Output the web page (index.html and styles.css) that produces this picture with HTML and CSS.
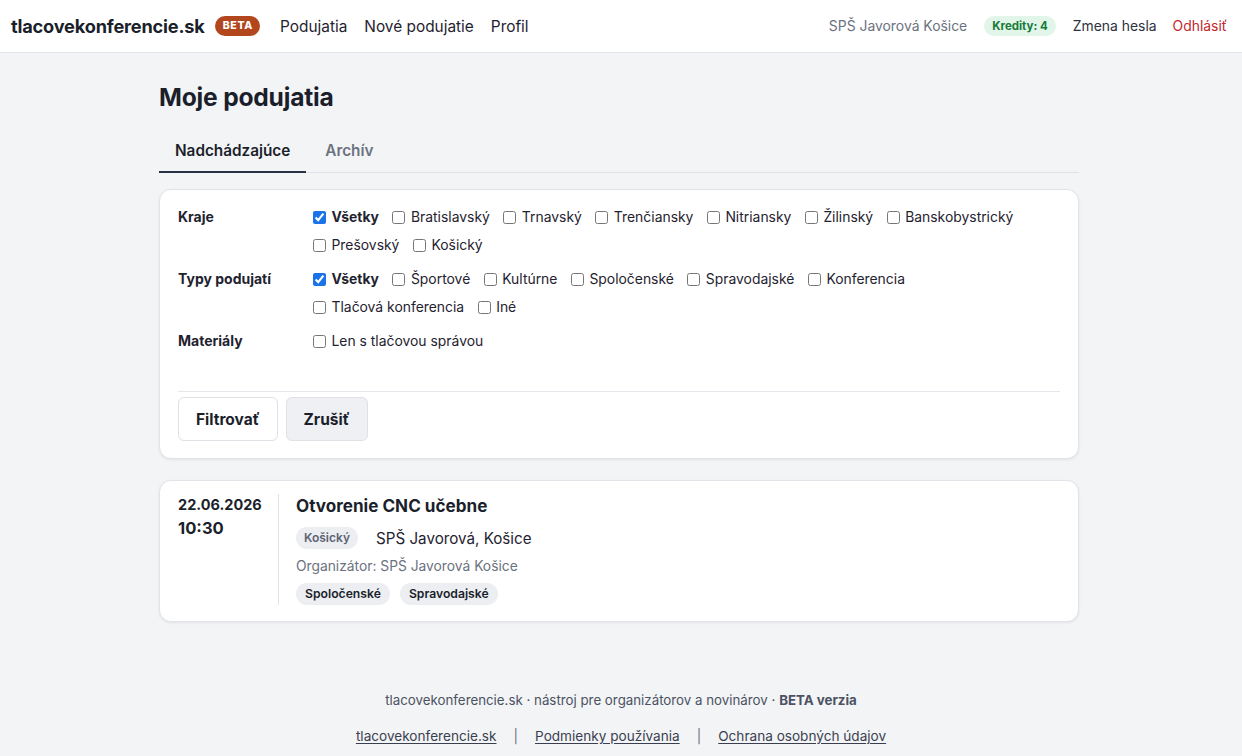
FILE: index.html
```html
<!DOCTYPE html>
<html lang="sk">
<head>
<meta charset="utf-8">
<title>Moje podujatia</title>
<link rel="stylesheet" href="styles.css">
</head>
<body>
<header class="topbar">
  <div class="left">
    <span class="brand">tlacovekonferencie.sk</span>
    <span class="beta">BETA</span>
    <nav class="mainnav">
      <a href="#">Podujatia</a>
      <a href="#">Nové podujatie</a>
      <a href="#">Profil</a>
    </nav>
  </div>
  <div class="right">
    <span class="org">SPŠ Javorová Košice</span>
    <span class="credits">Kredity: 4</span>
    <a href="#" class="plain">Zmena hesla</a>
    <a href="#" class="logout">Odhlásiť</a>
  </div>
</header>

<main class="container">
  <h1>Moje podujatia</h1>
  <div class="tabs">
    <a href="#" class="tab active">Nadchádzajúce</a>
    <a href="#" class="tab">Archív</a>
  </div>

  <form class="card filter">
    <div class="frow">
      <div class="flabel">Kraje</div>
      <div class="opts">
        <label class="opt strong"><input type="checkbox" checked>Všetky</label>
        <label class="opt"><input type="checkbox">Bratislavský</label>
        <label class="opt"><input type="checkbox">Trnavský</label>
        <label class="opt"><input type="checkbox">Trenčiansky</label>
        <label class="opt"><input type="checkbox">Nitriansky</label>
        <label class="opt"><input type="checkbox">Žilinský</label>
        <label class="opt"><input type="checkbox">Banskobystrický</label>
        <label class="opt"><input type="checkbox">Prešovský</label>
        <label class="opt"><input type="checkbox">Košický</label>
      </div>
    </div>
    <div class="frow">
      <div class="flabel">Typy podujatí</div>
      <div class="opts">
        <label class="opt strong"><input type="checkbox" checked>Všetky</label>
        <label class="opt"><input type="checkbox">Športové</label>
        <label class="opt"><input type="checkbox">Kultúrne</label>
        <label class="opt"><input type="checkbox">Spoločenské</label>
        <label class="opt"><input type="checkbox">Spravodajské</label>
        <label class="opt"><input type="checkbox">Konferencia</label>
        <label class="opt"><input type="checkbox">Tlačová konferencia</label>
        <label class="opt"><input type="checkbox">Iné</label>
      </div>
    </div>
    <div class="frow">
      <div class="flabel">Materiály</div>
      <div class="opts">
        <label class="opt"><input type="checkbox">Len s tlačovou správou</label>
      </div>
    </div>
    <div class="actions">
      <button type="button" class="btn">Filtrovať</button>
      <button type="button" class="btn grey">Zrušiť</button>
    </div>
  </form>

  <article class="card event">
    <div class="when">
      <div class="date">22.06.2026</div>
      <div class="time">10:30</div>
    </div>
    <div class="info">
      <h2>Otvorenie CNC učebne</h2>
      <div class="place"><span class="chip muted">Košický</span><span>SPŠ Javorová, Košice</span></div>
      <div class="organizer">Organizátor: SPŠ Javorová Košice</div>
      <div class="tags"><span class="chip">Spoločenské</span><span class="chip">Spravodajské</span></div>
    </div>
  </article>
</main>

<footer class="footer">
  <p class="tagline">tlacovekonferencie.sk · nástroj pre organizátorov a novinárov · <b>BETA verzia</b></p>
  <p class="links"><a href="#">tlacovekonferencie.sk</a><span class="sep">|</span><a href="#">Podmienky používania</a><span class="sep">|</span><a href="#">Ochrana osobných údajov</a></p>
</footer>
</body>
</html>
```

FILE: styles.css
```css
* { box-sizing: border-box; }
html, body { margin: 0; padding: 0; }
body {
  font-family: Inter, "Noto Sans", sans-serif;
  background: #f3f4f6;
  color: #1f2330;
  font-size: 14px;
}
a { color: inherit; text-decoration: none; }

.topbar {
  height: 53px;
  background: #fff;
  border-bottom: 1px solid #e4e6eb;
  display: flex;
  align-items: center;
  justify-content: space-between;
  padding: 0 15px 0 11px;
}
.left, .right { display: flex; align-items: center; }
.brand { font-size: 18.2px; font-weight: 700; letter-spacing: -0.2px; color: #1b1f2b; }
.beta {
  margin-left: 10px;
  background: #b2461c;
  color: #fff;
  font-size: 10.5px;
  font-weight: 800;
  letter-spacing: 0.7px;
  padding: 0 7px 0 8px;
  height: 20px;
  line-height: 20px;
  border-radius: 10px;
}
.mainnav { display: flex; gap: 17px; margin-left: 20px; font-size: 15.4px; color: #1f2330; }
.right { font-size: 13.9px; }
.org { color: #6b7280; }
.credits {
  margin-left: 17px;
  background: #e1f5e8;
  color: #177a3a;
  font-size: 11.5px;
  font-weight: 700;
  padding: 0 8px;
  height: 20px;
  line-height: 20px;
  border-radius: 10px;
}
.plain { margin-left: 17px; color: #2c3140; }
.logout { margin-left: 16px; color: #c2262c; }

.container { width: 920px; margin-left: calc(50% - 462px); padding-top: 28px; }
h1 { margin: 0; font-size: 24.6px; font-weight: 700; color: #1b1f2b; line-height: 32px; letter-spacing: -0.2px; }
.tabs {
  display: flex;
  margin-top: 22px;
  border-bottom: 1px solid #dfe1e6;
}
.tab {
  font-size: 15.3px;
  font-weight: 600;
  color: #6b7280;
  padding: 6px 16px 10px;
  margin-bottom: -1px;
  border-bottom: 2px solid transparent;
  line-height: 20px;
}
.tab.active { color: #1b1f2b; border-bottom-color: #283044; margin-right: 3px; }

.card {
  background: #fff;
  border: 1px solid #e1e3e8;
  border-radius: 12px;
  box-shadow: 0 1px 3px rgba(0,0,0,0.07);
}
.filter { margin-top: 16px; padding: 13px 18px 17px; }
.frow { display: flex; margin-bottom: 6px; }
.flabel { width: 135px; flex: none; font-weight: 700; font-size: 14px; line-height: 28px; }
.opts { display: flex; flex-wrap: wrap; column-gap: 13.5px; }
.opt { display: flex; align-items: center; font-size: 13.9px; line-height: 28px; color: #1f2330; }
.opt.strong { font-weight: 700; }
.opt input { margin: 0 5.5px 0 0; width: 13px; height: 13px; accent-color: #1a73e8; }
.actions {
  margin-top: 36px;
  border-top: 1px solid #e4e6eb;
  padding-top: 5px;
  display: flex;
  gap: 8px;
}
.btn {
  font-family: inherit;
  font-size: 15.5px;
  font-weight: 700;
  color: #1b1f2b;
  background: #fff;
  border: 1px solid #dfe1e6;
  border-radius: 6px;
  height: 44px;
  padding: 0 17px;
}
.btn.grey { background: #eff0f4; }

.event { margin-top: 21px; display: flex; padding: 13px 18px 16px; }
.when { width: 101px; flex: none; border-right: 1px solid #e1e3e8; font-weight: 700; color: #1b1f2b; }
.date { font-size: 14.5px; line-height: 20px; margin-top: 1px; }
.time { font-size: 16.6px; line-height: 22px; margin-top: 2px; }
.info { padding-left: 17px; }
h2 { margin: 0; font-size: 17.1px; font-weight: 700; line-height: 24px; color: #1b1f2b; }
.place { display: flex; align-items: center; gap: 18px; font-size: 15.2px; margin-top: 9px; }
.chip {
  display: inline-block;
  background: #eceef2;
  border-radius: 11px;
  font-size: 12.2px;
  font-weight: 600;
  padding: 0 9px;
  height: 22px;
  line-height: 22px;
  color: #1b1f2b;
}
.chip.muted { color: #5b6272; font-size: 12px; padding: 0 8px; }
.organizer { font-size: 13.8px; color: #6b7280; margin-top: 8px; line-height: 18px; }
.tags { display: flex; gap: 10px; margin-top: 8px; }

.footer { text-align: center; margin-top: 64px; color: #4b5262; font-size: 13.3px; }
.tagline { margin: 0; line-height: 28px; }
.tagline b { font-weight: 700; }
.links { margin: 11px 0 0; font-size: 13.6px; line-height: 22px; }
.links a { text-decoration: underline; text-underline-offset: 2px; color: #3a4050; }
.sep { margin: 0 17px; color: #6b7280; }
```
